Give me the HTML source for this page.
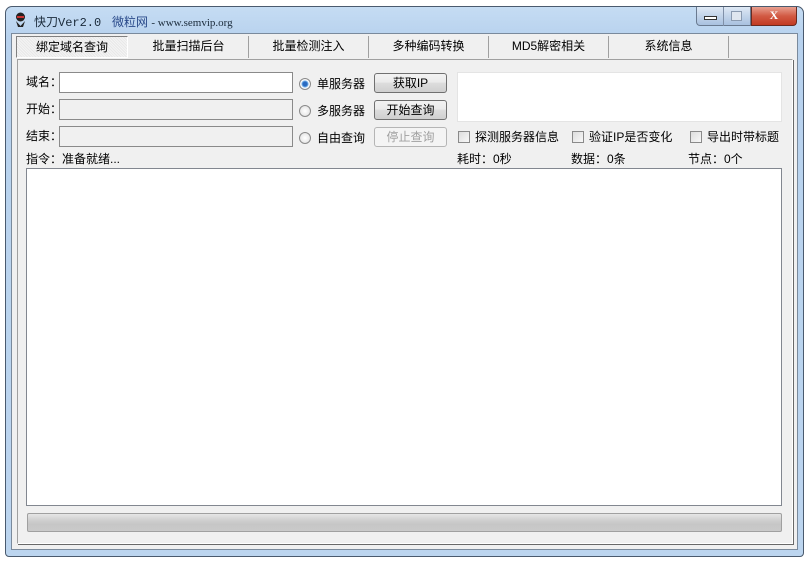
<!DOCTYPE html>
<html><head><meta charset="utf-8"><style>
*{box-sizing:border-box;margin:0;padding:0}
body{width:809px;height:562px;background:#fff;font-family:"Liberation Sans","Noto Sans CJK SC","WenQuanYi Zen Hei",sans-serif;font-size:12px;color:#000;position:relative;overflow:hidden}
.a{position:absolute}
.win{left:5px;top:6px;width:799px;height:551px;border:1px solid #4a5a6e;border-radius:7px 7px 4px 4px;background:linear-gradient(#c5dcf3,#b8d2ee 30px,#bcd5ef);}
.client{left:11px;top:33px;width:787px;height:517px;background:#f0f0f0;border:1px solid #7a8a9c}
.tab{top:36px;height:22px;text-align:center;line-height:21px;font-size:12px;border-right:1px solid #a0a0a0}
.inp{height:21px;border:1px solid #8a8a8a;background:#f0f0f0}
.btn{width:73px;height:20px;border:1px solid #707070;border-radius:3px;background:linear-gradient(#f2f2f2,#ebebeb 45%,#dddddd 50%,#cfcfcf);text-align:center;line-height:18px;font-size:12px}
.lbl{font-size:12px;line-height:16px}
.radio{width:12px;height:12px;border-radius:50%;border:1px solid #8a8a8a;background:radial-gradient(#fff,#ddd)}
.chk{width:12px;height:12px;border:1px solid #8a8a8a;background:linear-gradient(135deg,#ddd,#f8f8f8)}
</style></head><body>
<div class="a win"></div>
<div class="a" style="left:14px;top:12px;width:13px;height:15px;">
<svg width="13" height="15"><circle cx="6.5" cy="5" r="4.5" fill="#222"/><rect x="3" y="4" width="7" height="2" fill="#c33"/><path d="M2 9 L6.5 14 L11 9 L9 15 L4 15Z" fill="#222"/></svg></div>
<div class="a" style="left:34px;top:13px;font-family:'Liberation Mono','Noto Sans CJK SC',monospace;font-size:12px;color:#1a2a3a">快刀Ver2.0</div>
<div class="a" style="left:112px;top:13px;font-size:12px;color:#1a2a3a"><span style="color:#2a4a8a">微粒网</span> <span style="font-family:'Liberation Serif',serif;font-size:11px">- www.semvip.org</span></div>
<div class="a" style="left:696px;top:7px;width:55px;height:19px;border:1px solid #6a7a90;border-top:none;border-radius:0 0 0 4px;background:linear-gradient(#dfe9f5,#c2d4ea 50%,#a9c1df)"></div>
<div class="a" style="left:723px;top:7px;width:1px;height:19px;background:#8090a8"></div>
<div class="a" style="left:704px;top:16px;width:13px;height:4px;border:1px solid #333;background:#fff"></div>
<div class="a" style="left:731px;top:11px;width:11px;height:10px;border:1px solid #8a9ab0;background:#dfe6ef"></div>
<div class="a" style="left:751px;top:7px;width:46px;height:19px;border:1px solid #6a2a20;border-top:none;border-radius:0 0 4px 0;background:linear-gradient(#e8a090,#d25a44 50%,#c23a22);color:#fff;font-weight:bold;text-align:center;line-height:17px;font-size:12px;font-family:'Liberation Serif',serif">X</div>
<div class="a client"></div>
<div class="a tab" style="left:16px;width:112px;border:1px solid #808080;border-right-color:#fff;border-bottom-color:#fff;background:repeating-linear-gradient(45deg,#f4f4f4 0 1px,#e8e8e8 1px 2px)">绑定域名查询</div>
<div class="a tab" style="left:129px;width:120px">批量扫描后台</div>
<div class="a tab" style="left:249px;width:120px">批量检测注入</div>
<div class="a tab" style="left:369px;width:120px">多种编码转换</div>
<div class="a tab" style="left:489px;width:120px">MD5解密相关</div>
<div class="a tab" style="left:609px;width:120px">系统信息</div>
<div class="a" style="left:17px;top:59px;width:776px;height:485px;border:1px solid #fff;border-left-color:#a0a0a0;border-top-color:#a0a0a0;box-shadow:1px 1px 0 #696969"></div>
<div class="a lbl" style="left:26px;top:74px">域名：</div>
<div class="a lbl" style="left:26px;top:101px">开始：</div>
<div class="a lbl" style="left:26px;top:128px">结束：</div>
<div class="a inp" style="left:59px;top:72px;width:234px;background:#fff"></div>
<div class="a inp" style="left:59px;top:99px;width:234px"></div>
<div class="a inp" style="left:59px;top:126px;width:234px"></div>
<div class="a radio" style="left:299px;top:78px;background:radial-gradient(#2a6ac0 2px,#6aaae8 3px,#fff 4px,#ddd)"></div>
<div class="a radio" style="left:299px;top:105px"></div>
<div class="a radio" style="left:299px;top:132px"></div>
<div class="a lbl" style="left:317px;top:76px">单服务器</div>
<div class="a lbl" style="left:317px;top:103px">多服务器</div>
<div class="a lbl" style="left:317px;top:130px">自由查询</div>
<div class="a btn" style="left:374px;top:73px">获取IP</div>
<div class="a btn" style="left:374px;top:100px">开始查询</div>
<div class="a btn" style="left:374px;top:127px;border-color:#b5b5b5;background:#f4f4f4;color:#a0a0a0">停止查询</div>
<div class="a" style="left:457px;top:72px;width:325px;height:50px;background:#fff;border:1px solid #e4e4e4"></div>
<div class="a chk" style="left:458px;top:131px"></div>
<div class="a lbl" style="left:475px;top:129px">探测服务器信息</div>
<div class="a chk" style="left:572px;top:131px"></div>
<div class="a lbl" style="left:589px;top:129px">验证IP是否变化</div>
<div class="a chk" style="left:690px;top:131px"></div>
<div class="a lbl" style="left:707px;top:129px">导出时带标题</div>
<div class="a lbl" style="left:26px;top:151px">指令：准备就绪...</div>
<div class="a lbl" style="left:457px;top:151px">耗时：0秒</div>
<div class="a lbl" style="left:571px;top:151px">数据：0条</div>
<div class="a lbl" style="left:688px;top:151px">节点：0个</div>
<div class="a" style="left:26px;top:168px;width:756px;height:338px;background:#fff;border:1px solid #828790"></div>
<div class="a" style="left:27px;top:513px;width:755px;height:19px;border:1px solid #a0a0a0;border-radius:2px;background:linear-gradient(#e6e6e6,#d0d0d0 35%,#c6c6c6 60%,#cacaca)"></div>
</body></html>
